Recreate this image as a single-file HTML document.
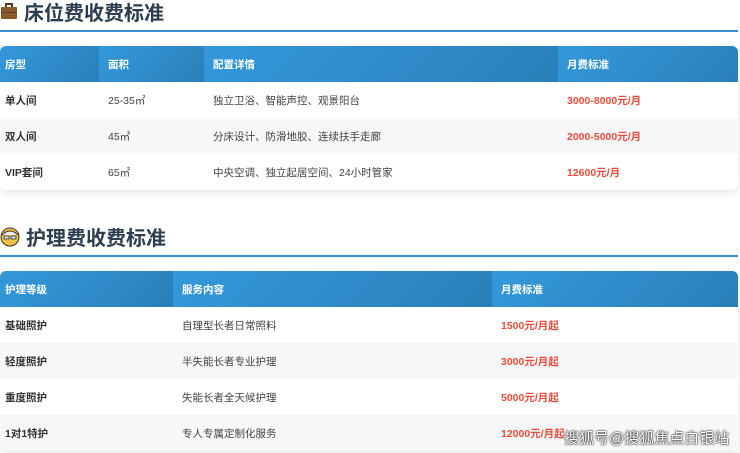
<!DOCTYPE html>
<html><head><meta charset="utf-8"><style>
body{margin:0;width:740px;height:453px;overflow:hidden;background:#fff;font-family:"Liberation Sans","Noto Sans CJK SC",sans-serif;position:relative}
.t{position:absolute;left:0;font-size:20px;font-weight:bold;color:#2c3e50;display:flex;align-items:center;gap:6px}
.line{position:absolute;left:0;width:738px;height:2px;background:#3a8fd6}
table{position:absolute;left:0;width:738px;border-collapse:collapse;font-size:10.5px;color:#444;border-radius:6px;overflow:hidden;box-shadow:0 2px 8px rgba(0,0,0,.12);background:#fff}
th{height:36px;text-align:left;padding:0 0 0 9px;color:#fff;font-weight:bold;background:linear-gradient(135deg,#3498db,#2980b9)}
td{height:36px;padding:0 0 0 9px;background:#fff}
th:first-child,td:first-child{padding-left:5px}
tr.g td{background:#f5f7f9}
td.b{font-weight:bold;color:#333}
td.p{color:#e74c3c;font-weight:bold}
.wm{position:absolute;left:564px;top:427px;font-size:15px;color:#fff;text-shadow:0 0 2px #000,0 0 1px #000;letter-spacing:0}
</style></head><body>
<div class="t" style="top:-3px"><svg width="18" height="18" viewBox="0 0 18 18"><rect x="6" y="1" width="6" height="4" fill="none" stroke="#5a3a22" stroke-width="2"/><rect x="1" y="4" width="16" height="12" rx="1" fill="#8b5a2b"/><rect x="1" y="9" width="16" height="1" fill="#5a3a22"/></svg>床位费收费标准</div>
<div class="line" style="top:30px"></div>
<table style="top:46px">
<tr><th style="width:94px">房型</th><th style="width:96px">面积</th><th style="width:345px">配置详情</th><th>月费标准</th></tr>
<tr><td class="b">单人间</td><td>25-35㎡</td><td>独立卫浴、智能声控、观景阳台</td><td class="p">3000-8000元/月</td></tr>
<tr class="g"><td class="b">双人间</td><td>45㎡</td><td>分床设计、防滑地胶、连续扶手走廊</td><td class="p">2000-5000元/月</td></tr>
<tr><td class="b">VIP套间</td><td>65㎡</td><td>中央空调、独立起居空间、24小时管家</td><td class="p">12600元/月</td></tr>
</table>
<div class="t" style="top:222px"><svg width="20" height="20" viewBox="0 0 20 20"><circle cx="10" cy="10" r="9" fill="#f5c242" stroke="#333" stroke-width="1"/><path d="M2 8 Q10 0 18 8" fill="#eee" stroke="#333"/><rect x="4" y="9" width="5" height="3" fill="#cde" stroke="#333" stroke-width=".8"/><rect x="11" y="9" width="5" height="3" fill="#cde" stroke="#333" stroke-width=".8"/></svg>护理费收费标准</div>
<div class="line" style="top:255px"></div>
<table style="top:271px">
<tr><th style="width:168px">护理等级</th><th style="width:310px">服务内容</th><th>月费标准</th></tr>
<tr><td class="b">基础照护</td><td>自理型长者日常照料</td><td class="p">1500元/月起</td></tr>
<tr class="g"><td class="b">轻度照护</td><td>半失能长者专业护理</td><td class="p">3000元/月起</td></tr>
<tr><td class="b">重度照护</td><td>失能长者全天候护理</td><td class="p">5000元/月起</td></tr>
<tr class="g"><td class="b">1对1特护</td><td>专人专属定制化服务</td><td class="p">12000元/月起</td></tr>
</table>
<div class="wm">搜狐号@搜狐焦点白银站</div>
</body></html>
